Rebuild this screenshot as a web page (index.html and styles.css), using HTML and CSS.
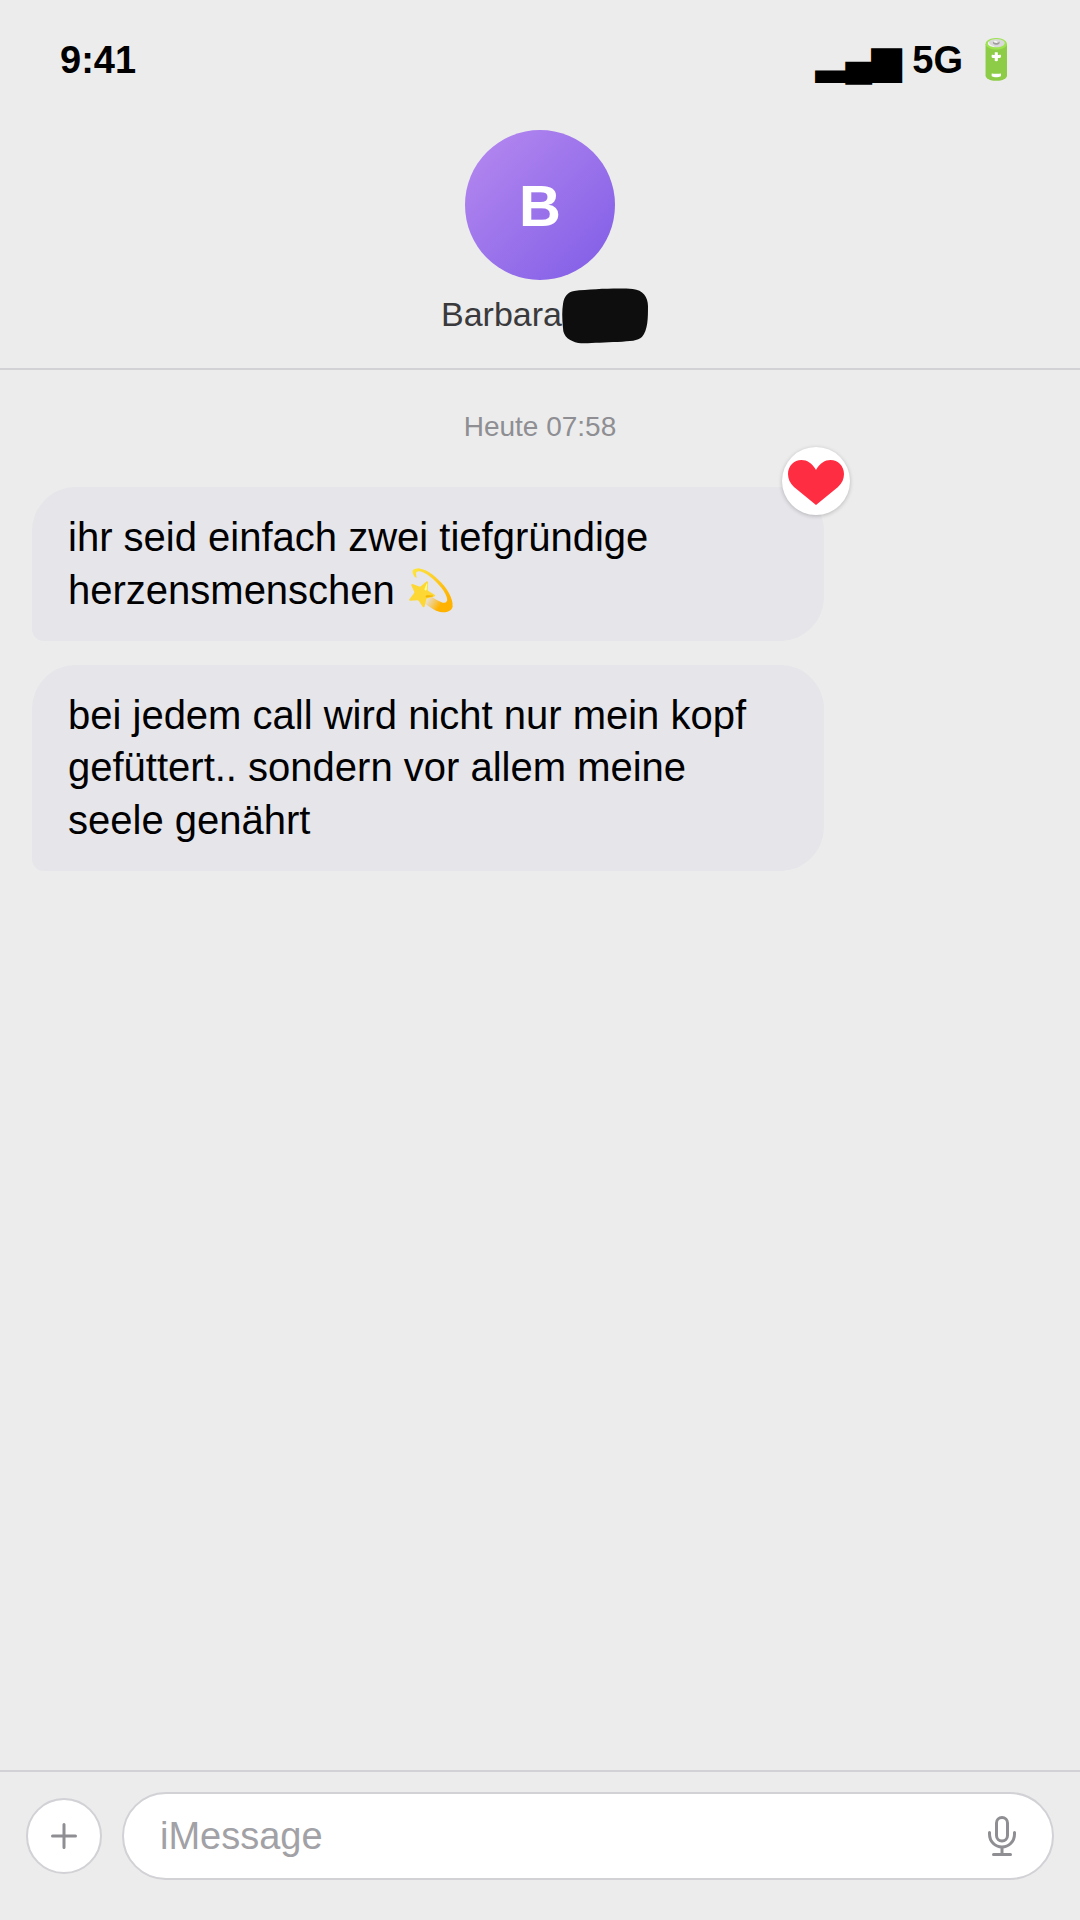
FILE: index.html
```html
<!DOCTYPE html>
<html lang="de">

<head>
  <meta charset="UTF-8">
  <meta name="viewport" content="width=device-width, initial-scale=1.0">
  <title>Barbara</title>
  <link rel="stylesheet" href="styles.css">
</head>

<body>
  <div class="phone">
    <div class="status">
      <span class="time">9:41</span>
      <div class="status-right">
        <span class="signal">▂▄▆</span>
        <span class="net">5G</span>
        <span class="battery">🔋</span>
      </div>
    </div>

    <div class="contact">
      <div class="avatar">B</div>
      <div class="name">
        <span class="first">Barbara</span>
        <svg class="scribble" width="87" height="56" viewBox="0 0 86 56" preserveAspectRatio="none">
          <path d="M12 3 C30 1 55 0 70 1 C80 2 85 9 85 18 C85 30 85 42 79 49 C75 53 68 53 55 54 C40 54 25 56 16 55 C8 53 1 49 1 40 C0 30 0 22 1 16 C2 8 6 4 12 3 Z" fill="#0e0e0e" />
        </svg>
      </div>
    </div>

    <div class="chat">
      <div class="stamp">Heute 07:58</div>
      <div class="bubble">
        ihr seid einfach zwei tiefgründige herzensmenschen 💫
        <div class="reaction">
          <svg width="56" height="45" viewBox="0 0 56 45">
            <path d="M28 10 C24 3 19 0 13.500 0 C6 0 0 6 0 14 C0 19 2 23 6 27 L28 45 L50 27 C54 23 56 19 56 14 C56 6 50 0 42.500 0 C37 0 32 3 28 10 Z" fill="#ff2d42" />
          </svg>
        </div>
      </div>
      <div class="bubble">bei jedem call wird nicht nur mein kopf gefüttert.. sondern vor allem meine seele genährt</div>
    </div>

    <div class="composer">
      <div class="plus">
        <svg width="28" height="28" viewBox="0 0 28 28">
          <path d="M14 2.500 V25.500 M2.500 14 H25.500" stroke="#8e8e93" stroke-width="3" stroke-linecap="round" fill="none" />
        </svg>
      </div>
      <div class="input">
        <span class="placeholder">iMessage</span>
        <svg width="28" height="40" viewBox="0 0 28 40">
          <rect x="8.500" y="1.500" width="11" height="23.500" rx="5.500" fill="none" stroke="#8e8e93" stroke-width="3" />
          <path d="M1.500 16.500 V18 C1.500 25.500 7 31 14 31 C21 31 26.500 25.500 26.500 18 V16.500" fill="none" stroke="#8e8e93" stroke-width="3" stroke-linecap="round" />
          <path d="M14 31 V38" fill="none" stroke="#8e8e93" stroke-width="3" />
          <path d="M5.500 38.500 H22.500" fill="none" stroke="#8e8e93" stroke-width="3" stroke-linecap="round" />
        </svg>
      </div>
    </div>
  </div>
</body>

</html>
```

FILE: styles.css
```css
* {
  margin: 0;
  padding: 0;
  box-sizing: border-box;
}

body {
  background: #ececec;
  font-family: "Liberation Sans", Arial, sans-serif;
}

.phone {
  width: 1080px;
  height: 1920px;
  display: flex;
  flex-direction: column;
}

/* status bar */
.status {
  height: 120px;
  padding: 38px 59px 0 60px;
  display: flex;
  justify-content: space-between;
  align-items: flex-start;
  font-weight: bold;
  font-size: 38px;
  line-height: 44px;
  color: #000;
}

.status-right {
  display: flex;
  align-items: flex-start;
  gap: 9px;
}

.signal {
  margin-right: 2px;
}

.battery {
  font-size: 39px;
}

.contact {
  height: 250px;
  padding-top: 10px;
  border-bottom: 2px solid #d1d1d6;
  display: flex;
  flex-direction: column;
  align-items: center;
}

.avatar {
  width: 150px;
  height: 150px;
  border-radius: 50%;
  background: linear-gradient(135deg, #b78af0, #7f5ce6);
  color: #fff;
  font-size: 58px;
  font-weight: bold;
  display: flex;
  align-items: center;
  justify-content: center;
}

.name {
  margin-top: 8px;
  margin-left: 10px;
  display: flex;
  align-items: center;
  font-size: 34px;
  color: #3a3a3c;
}

.first {
  margin-bottom: 3px;
}

.chat {
  flex: 1;
  padding: 40px 32px 0;
  display: flex;
  flex-direction: column;
  align-items: flex-start;
  gap: 24px;
}

.stamp {
  align-self: center;
  font-size: 28px;
  line-height: 34px;
  color: #8e8e93;
  margin-bottom: 19px;
}

.bubble {
  position: relative;
  width: 792px;
  padding: 24px 36px;
  background: #e5e5ea;
  border-radius: 44px 44px 44px 12px;
  font-size: 40px;
  line-height: 1.32;
  color: #000;
}

.reaction {
  position: absolute;
  top: -40px;
  right: -26px;
  width: 68px;
  height: 68px;
  padding-top: 3px;
  border-radius: 50%;
  background: #fff;
  box-shadow: 0 1px 4px rgba(0, 0, 0, 0.22);
  display: flex;
  align-items: center;
  justify-content: center;
}

/* bottom bar */
.composer {
  height: 150px;
  border-top: 2px solid #d1d1d6;
  padding: 20px 26px 0;
  display: flex;
  align-items: flex-start;
  gap: 20px;
}

.plus {
  width: 76px;
  height: 76px;
  margin-top: 6px;
  border-radius: 50%;
  background: #fff;
  border: 2px solid #d1d1d6;
  display: flex;
  align-items: center;
  justify-content: center;
}

.input {
  flex: 1;
  height: 88px;
  border-radius: 44px;
  background: #fff;
  border: 2px solid #d1d1d6;
  padding: 0 36px;
  display: flex;
  align-items: center;
  justify-content: space-between;
}

.placeholder {
  font-size: 38px;
  color: #a1a1a6;
}
```
